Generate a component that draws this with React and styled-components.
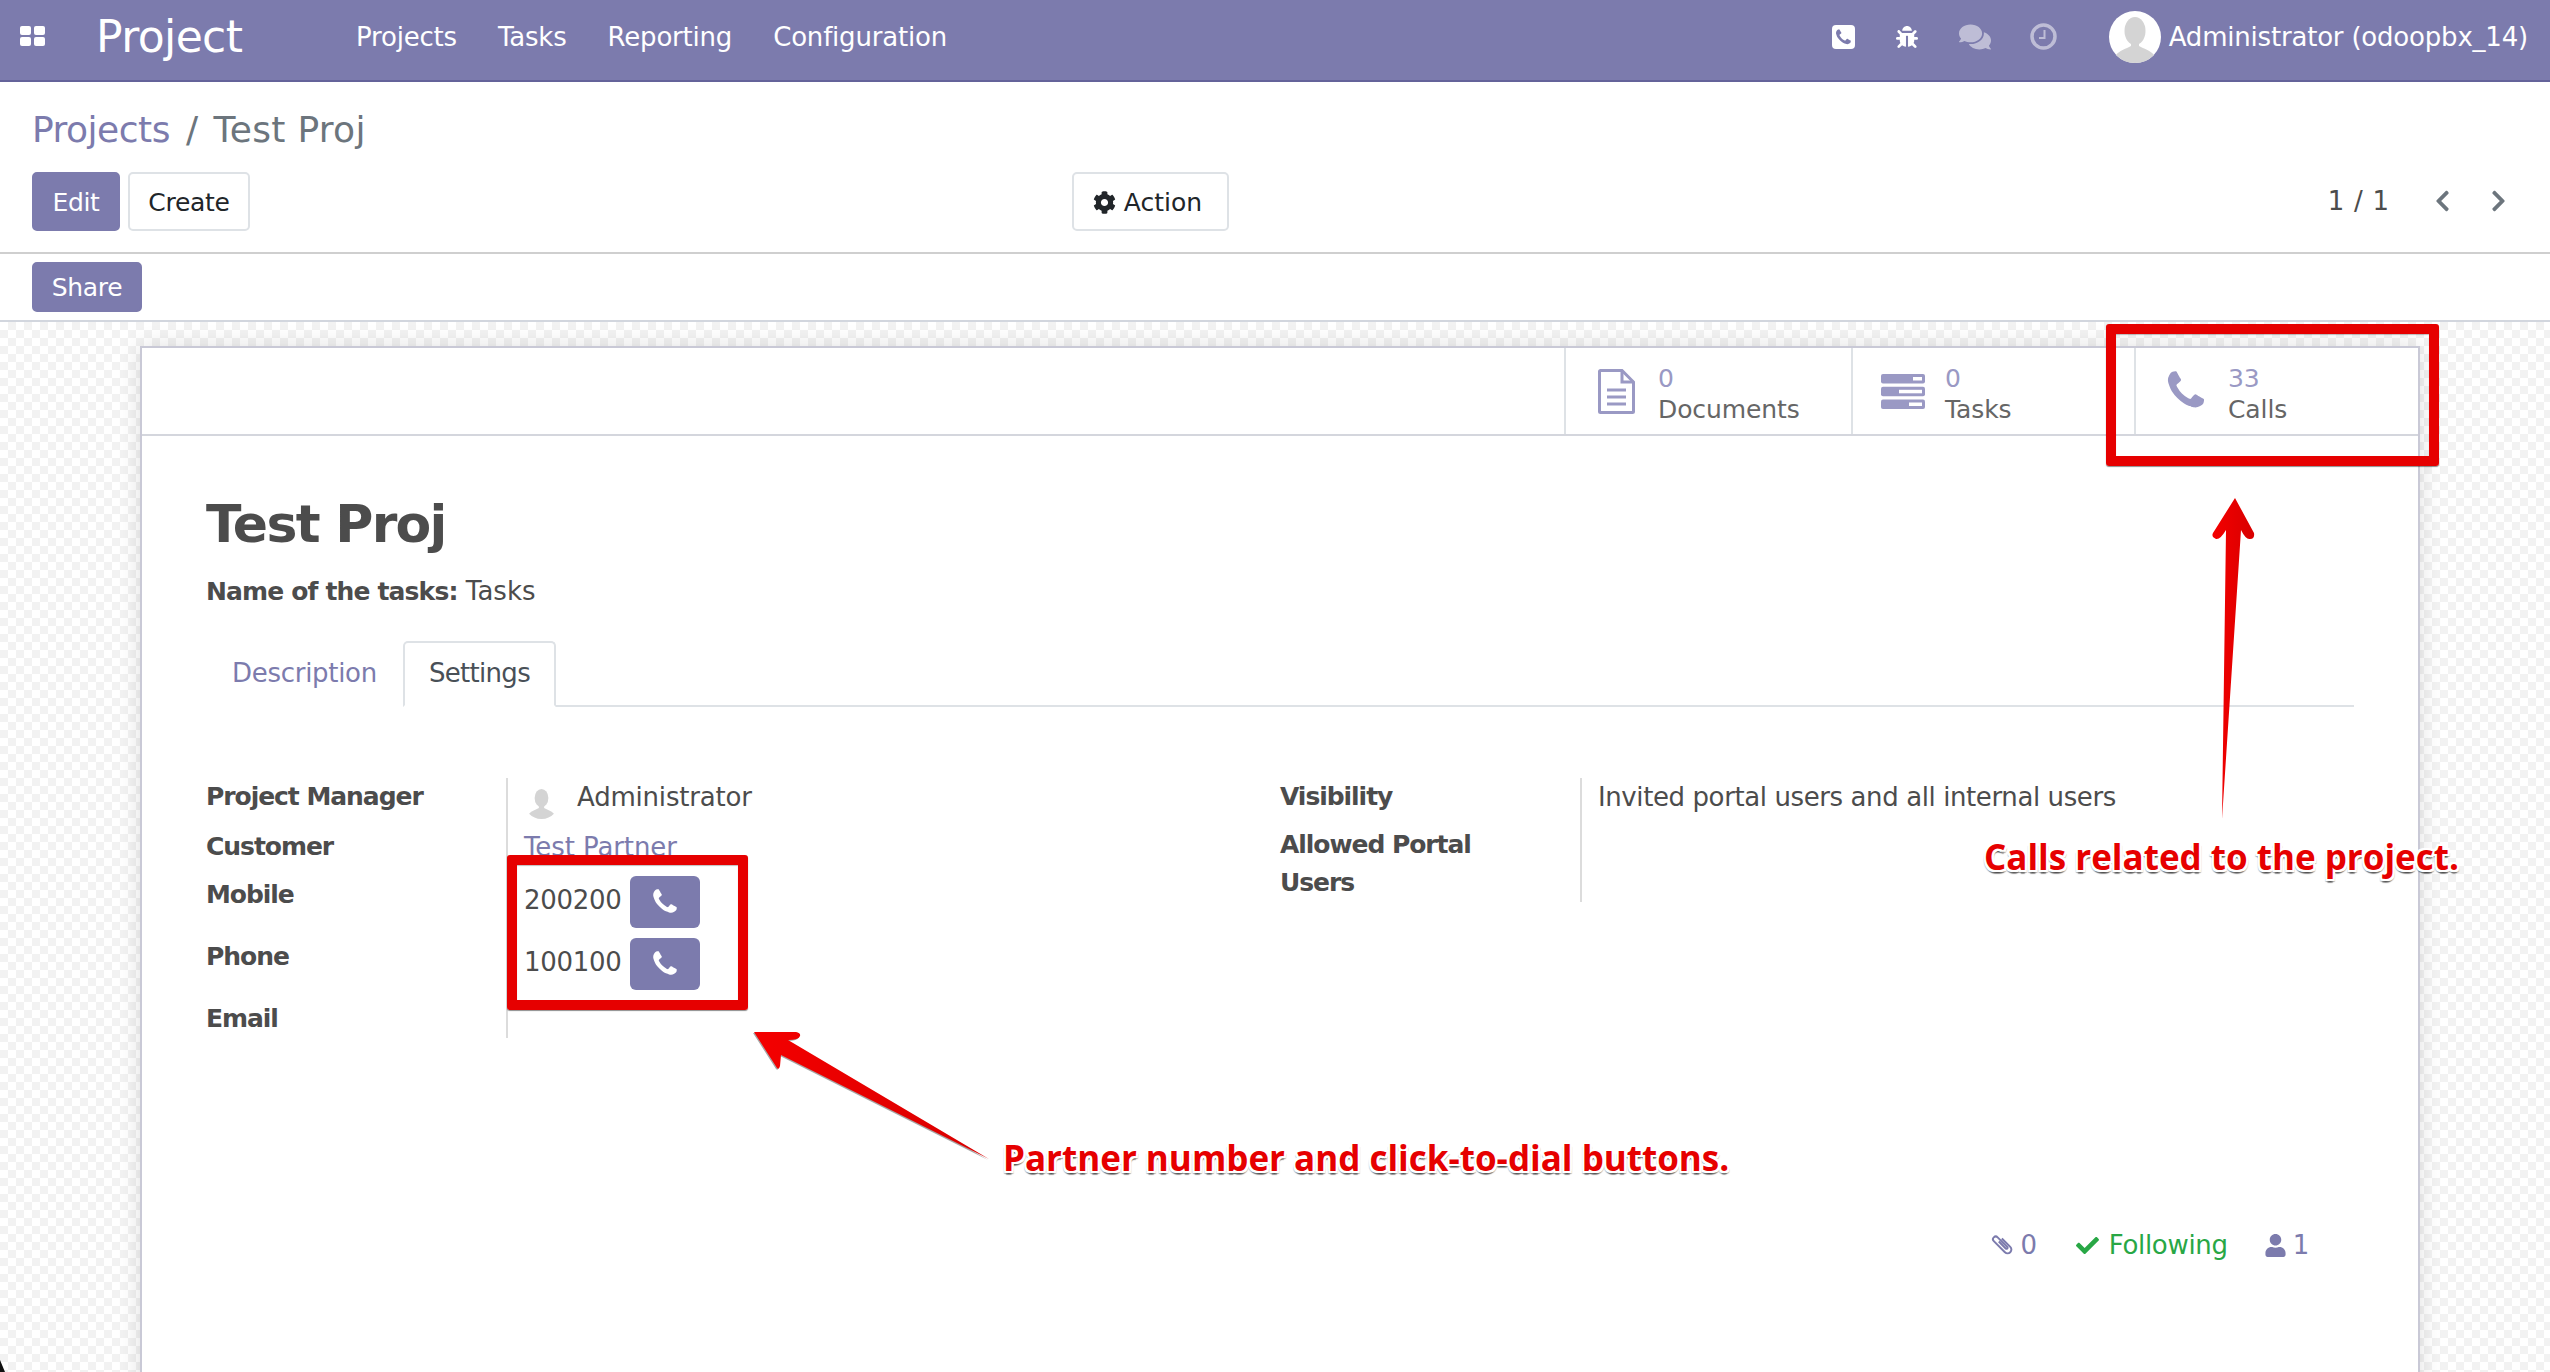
import React from "react";
import styled, { createGlobalStyle } from "styled-components";
import { FaBug, FaComments, FaCog, FaCheck, FaUser, FaChevronLeft, FaChevronRight } from "react-icons/fa";

const PRIMARY = "#7c7bad";
const TEXT = "#4c4c4c";
const UI_FONT = '"DejaVu Sans", "Noto Sans", sans-serif';
const PHONE_D = "M1600 1240q0 27-10 70.5t-21 68.5q-21 50-122 106-94 51-186 51-27 0-53-3.5t-57.5-12.5-47-14.5-55.5-20.5-49-18q-98-35-175-83-127-79-264-216t-216-264q-48-77-83-175-3-9-18-49t-20.5-55.5-14.5-47-12.5-57.5-3.5-53q0-92 51-186 56-101 106-122 25-11 68.5-21t70.5-10q14 0 21 3 18 6 53 76 11 19 30 54t35 63.5 31 53.5q3 4 17.5 25t21.5 35.5 7 28.5q0 20-28.5 50t-62 55-62 53-28.5 46q0 9 5 22.5t8.5 20.5 14 24 11.5 19q76 137 174 235t235 174q2 1 19 11.5t24 14 20.5 8.5 22.5 5q18 0 46-28.5t53-62 55-62 50-28.5q14 0 28.5 7t35.5 21.5 25 17.5q25 15 53.5 31t63.5 35 54 30q70 35 76 53 3 7 3 21z";

const Global = createGlobalStyle`
  html, body { margin: 0; padding: 0; background: #fff; }
  body { font-family: ${UI_FONT}; font-size: 26px; color: ${TEXT}; overflow: hidden; }
  * { box-sizing: border-box; }
`;

const Page = styled.div`
  position: relative;
  width: 2550px;
  height: 1372px;
  overflow: hidden;
  display: flex;
  flex-direction: column;
`;

/* ---------- top navigation ---------- */
const Nav = styled.header`
  flex: none;
  height: 82px;
  background: ${PRIMARY};
  border-bottom: 2px solid #64639a;
  display: flex;
  align-items: center;
  color: #fff;
  padding: 0 22px 7px 20px;
`;
const AppsIcon = styled.svg`
  width: 25px;
  height: 20px;
  fill: #fff;
  margin-top: -1px;
`;
const Brand = styled.span`
  font-size: 44px;
  margin-left: 51px;
  width: 260px;
  letter-spacing: -0.6px;
`;
const NavLinks = styled.nav`
  display: flex;
  gap: 41px;
  font-size: 26px;
  letter-spacing: -0.2px;
`;
const NavRight = styled.div`
  margin-left: auto;
  display: flex;
  align-items: center;
`;
const NavIcon = styled.span`
  display: flex;
  width: ${(p) => p.$w}px;
  margin-right: ${(p) => p.$gap}px;
  opacity: ${(p) => (p.$dim ? 0.5 : 1)};
  svg { display: block; }
`;
const UserName = styled.span`
  font-size: 26px;
  margin-left: 8px;
  letter-spacing: -0.2px;
`;

/* ---------- control panel ---------- */
const ControlPanel = styled.section`
  flex: none;
  height: 172px;
  border-bottom: 2px solid #cfcfcf;
  padding: 0 44px 0 32px;
  display: flex;
  flex-direction: column;
`;
const Breadcrumb = styled.div`
  height: 90px;
  padding-top: 5px;
  display: flex;
  align-items: center;
  font-size: 36px;
  color: #6c757d;
  gap: 16px;
  letter-spacing: -0.5px;
`;
const Crumb = styled.span`
  color: ${PRIMARY};
`;
const CurrentCrumb = styled.span`
  letter-spacing: 0.3px;
`;
const Tools = styled.div`
  display: grid;
  grid-template-columns: 1040px 157px 1fr;
  height: 59px;
`;
const ButtonGroup = styled.div`
  display: flex;
  gap: 8px;
`;
const Button = styled.button`
  font-family: ${UI_FONT};
  font-size: 25px;
  letter-spacing: ${(p) => p.$ls ?? -0.3}px;
  border-radius: 5px;
  padding: ${(p) => p.$pad || "2px 0 0"};
  width: ${(p) => p.$w}px;
  height: ${(p) => p.$h || 59}px;
  display: flex;
  align-items: center;
  justify-content: center;
  gap: 8px;
  color: ${(p) => (p.$primary ? "#fff" : "#212529")};
  background: ${(p) => (p.$primary ? PRIMARY : "#fff")};
  border: 2px solid ${(p) => (p.$primary ? PRIMARY : "#dee2e6")};
`;
const Pager = styled.div`
  display: flex;
  align-items: center;
  justify-content: flex-end;
  font-size: 26px;
  color: ${TEXT};
  margin-top: -2px;
`;
const PagerLabel = styled.span`
  margin-right: 46px;
  word-spacing: 1.5px;
`;
const PagerArrow = styled.span`
  display: flex;
  color: #6c757d;
  width: ${(p) => p.$w}px;
  svg { width: 15px; height: 24px; display: block; }
`;

/* ---------- status bar ---------- */
const ActionBar = styled.section`
  flex: none;
  height: 68px;
  border-bottom: 2px solid #d2d6de;
  padding: 8px 32px;
`;

/* ---------- sheet ---------- */
const Backdrop = styled.main`
  flex: 1;
  min-height: 0;
  padding: 24px 130px 0 140px;
  background-color: #fff;
  background-image: conic-gradient(#f2f2f2 25%, #fff 0 50%, #f2f2f2 0 75%, #fff 0);
  background-size: 16px 16px;
`;
const Sheet = styled.div`
  width: 2280px;
  height: 1100px;
  background: #fff;
  border: 2px solid #c9c9d6;
  box-shadow: 0 0 22px rgba(0, 0, 0, 0.12);
`;
const StatBar = styled.div`
  height: 88px;
  border-bottom: 2px solid #d4d6dd;
  display: flex;
  justify-content: flex-end;
`;
const StatButton = styled.div`
  width: ${(p) => p.$w}px;
  border-left: 2px solid #dee2e6;
  padding-left: 8px;
  display: flex;
  align-items: center;
`;
const StatIcon = styled.div`
  width: 84px;
  display: flex;
  justify-content: center;
  svg { display: block; }
`;
const StatText = styled.div`
  display: flex;
  flex-direction: column;
  padding-top: 5px;
  font-size: 25px;
  line-height: 31px;
  color: #666;
  letter-spacing: -0.1px;
`;
const StatValue = styled.span`
  color: #9a99c4;
  font-weight: 400;
`;
const FormBody = styled.div`
  padding: 56px 64px 0;
`;
const Title = styled.h1`
  margin: 0;
  font-size: 52px;
  line-height: 64px;
  font-weight: 700;
  letter-spacing: -1.7px;
  color: ${TEXT};
`;
const Subtitle = styled.div`
  margin-top: 16px;
  line-height: 38px;
  font-size: 26px;
`;
const Strong = styled.span`
  font-size: 25px;
  font-weight: 700;
  letter-spacing: -0.85px;
`;
const Tabs = styled.div`
  margin-top: 30px;
  height: 66px;
  border-bottom: 2px solid #dee2e6;
  display: flex;
`;
const Tab = styled.div`
  width: ${(p) => p.$w}px;
  height: 66px;
  padding-bottom: 3px;
  display: flex;
  align-items: center;
  justify-content: center;
  color: ${(p) => (p.$active ? "#495057" : PRIMARY)};
  background: #fff;
  letter-spacing: ${(p) => p.$ls}px;
  border-radius: 5px 5px 0 0;
  border: 2px solid ${(p) => (p.$active ? "#dee2e6" : "transparent")};
  border-bottom-color: ${(p) => (p.$active ? "#fff" : "transparent")};
`;
const Columns = styled.div`
  margin-top: 71px;
  display: grid;
  grid-template-columns: 1074px 1fr;
  align-items: start;
`;
const FieldTable = styled.div`
  display: grid;
  grid-template-columns: 300px 1fr;
  grid-template-rows: ${(p) => p.$rows};
`;
const Label = styled.div`
  font-size: 25px;
  font-weight: 700;
  line-height: 38px;
  letter-spacing: -1.05px;
  color: ${TEXT};
`;
const Value = styled.div`
  border-left: 2px solid #dcdcdc;
  padding-left: 16px;
  line-height: 38px;
  display: flex;
  align-items: flex-start;
  letter-spacing: -0.4px;
`;
const PartnerLink = styled.span`
  color: ${PRIMARY};
  letter-spacing: -0.1px;
`;
const ManagerName = styled.span`
  letter-spacing: -0.2px;
`;
const Avatar = styled.svg`
  width: 35px;
  height: 34px;
  margin: 7px 18px 0 0;
  flex: none;
`;
const PhoneNumber = styled.span`
  line-height: 48px;
  width: 106px;
  letter-spacing: -0.3px;
`;
const DialButton = styled.button`
  width: 70px;
  height: 52px;
  padding: 0;
  border: none;
  border-radius: 6px;
  background: ${PRIMARY};
  display: flex;
  align-items: center;
  justify-content: center;
  svg { display: block; fill: #fff; }
`;
const Chatter = styled.div`
  margin-top: 188px;
  padding-right: 45px;
  display: flex;
  justify-content: flex-end;
  align-items: center;
  line-height: 38px;
  color: ${PRIMARY};
`;
const ChatterItem = styled.span`
  display: flex;
  align-items: center;
  gap: ${(p) => p.$gap}px;
  margin-left: ${(p) => p.$left}px;
  color: ${(p) => (p.$green ? "#28a745" : PRIMARY)};
  letter-spacing: -0.3px;
`;

/* ---------- annotations laid over the screenshot ---------- */
const RedBox = styled.div`
  position: absolute;
  left: ${(p) => p.$x}px;
  top: ${(p) => p.$y}px;
  width: ${(p) => p.$w}px;
  height: ${(p) => p.$h}px;
  border: 10px solid #e60000;
  border-radius: 3px;
  box-shadow: 0 1px 1px rgba(0, 0, 0, 0.45), inset 0 1px 1px rgba(0, 0, 0, 0.25);
`;
const Callout = styled.div`
  position: absolute;
  left: ${(p) => p.$x}px;
  top: ${(p) => p.$y}px;
  font-family: "Open Sans", "Noto Sans", sans-serif;
  font-weight: 700;
  font-size: 35px;
  line-height: 50px;
  white-space: nowrap;
  color: #e60000;
  text-shadow: 2px 0 0 #fff, -2px 0 0 #fff, 0 2px 0 #fff, 0 -2px 0 #fff, 2px 2px 0 #fff, -2px 2px 0 #fff,
    2px -2px 0 #fff, -2px -2px 0 #fff, 0 4px 1px rgba(0, 0, 0, 0.4), 2px 3px 1px rgba(0, 0, 0, 0.3),
    -2px 3px 1px rgba(0, 0, 0, 0.3);
`;
const ArrowLayer = styled.svg`
  position: absolute;
  left: 0;
  top: 0;
  width: 2550px;
  height: 1372px;
  pointer-events: none;
`;
const WindowCorner = styled.div`
  position: absolute;
  left: 0;
  bottom: 0;
  width: 5px;
  height: 12px;
  background: #111;
  clip-path: polygon(0 0, 100% 100%, 0 100%);
`;

const Phone = ({ size, fill }) => (
  <svg width={size} height={size} viewBox="0 0 1792 1792" fill={fill}>
    <path d={PHONE_D} />
  </svg>
);

const PhoneSquare = () => (
  <svg width="23" height="24" viewBox="0 0 23 24">
    <rect width="23" height="24" rx="4" fill="#fff" />
    <g transform="translate(2 3) scale(0.0105)">
      <path d={PHONE_D} fill={PRIMARY} />
    </g>
  </svg>
);

const Clock = () => (
  <svg width="27" height="27" viewBox="0 0 27 27" fill="none" stroke="#fff">
    <circle cx="13.5" cy="13.5" r="11.5" strokeWidth="3.5" />
    <path d="M14.5 7v8H9" strokeWidth="2" />
  </svg>
);

const Silhouette = ({ ring }) => (
  <>
    {ring && <circle cx="26" cy="26" r="26" fill="#fff" />}
    <ellipse cx="26" cy="20" rx="10.5" ry="14" fill="#d4d4d4" />
    <path
      d="M22 31h8v4c5 3 11 4 15 9-4.700 5-11 8-19 8s-14-3-19-8c4-5 10-6 15-9z"
      fill="#d4d4d4"
    />
  </>
);

const FileIcon = () => (
  <svg width="37" height="45" viewBox="0 0 37 45" fill="none" stroke="#9a99c4" strokeWidth="3">
    <path d="M1.500 2.500a1 1 0 0 1 1-1H24L35.500 13v29.500a1 1 0 0 1-1 1h-32a1 1 0 0 1-1-1z" />
    <path d="M24 1.500V13h11.500" />
    <path d="M9 21h19M9 28h19M9 35h19" />
  </svg>
);

const TasksIcon = () => (
  <svg width="44" height="35" viewBox="0 0 44 35">
    <g fill="#9a99c4">
      <rect y="0" width="44" height="9.500" rx="2" />
      <rect y="12.800" width="44" height="9.500" rx="2" />
      <rect y="25.500" width="44" height="9.500" rx="2" />
    </g>
    <g fill="#fff">
      <rect x="32" y="3" width="9" height="3.500" />
      <rect x="18" y="15.800" width="23" height="3.500" />
      <rect x="28" y="28.500" width="13" height="3.500" />
    </g>
  </svg>
);

const Clip = () => (
  <svg width="24" height="26" viewBox="0 0 22 24" fill="none" stroke={PRIMARY} strokeWidth="1.800">
    <g transform="rotate(-45 11 12)">
      <path d="M14.500 7v11a3.500 3.500 0 0 1-7 0V3.500a2.500 2.500 0 0 1 5 0V16a1 1 0 0 1-2 0V7" />
    </g>
  </svg>
);

export default function App() {
  return (
    <Page>
      <Global />
      <Nav>
        <AppsIcon viewBox="0 0 25 20">
          <rect width="11" height="9" rx="2" />
          <rect x="14" width="11" height="9" rx="2" />
          <rect y="11" width="11" height="9" rx="2" />
          <rect x="14" y="11" width="11" height="9" rx="2" />
        </AppsIcon>
        <Brand>Project</Brand>
        <NavLinks>
          <span>Projects</span>
          <span>Tasks</span>
          <span>Reporting</span>
          <span>Configuration</span>
        </NavLinks>
        <NavRight>
          <NavIcon $w={23} $gap={41}><PhoneSquare /></NavIcon>
          <NavIcon $w={22} $gap={41}><FaBug size={22} /></NavIcon>
          <NavIcon $w={32} $gap={39} $dim><FaComments size={32} /></NavIcon>
          <NavIcon $w={27} $gap={52} $dim><Clock /></NavIcon>
          <svg width="52" height="52" viewBox="0 0 52 52"><Silhouette ring /></svg>
          <UserName>Administrator (odoopbx_14)</UserName>
        </NavRight>
      </Nav>

      <ControlPanel>
        <Breadcrumb>
          <Crumb>Projects</Crumb>
          <span>/</span>
          <CurrentCrumb>Test Proj</CurrentCrumb>
        </Breadcrumb>
        <Tools>
          <ButtonGroup>
            <Button $primary $w={88}>Edit</Button>
            <Button $w={122}>Create</Button>
          </ButtonGroup>
          <Button $w={157} $ls={0} $pad="2px 6px 0 0"><FaCog size={23} />Action</Button>
          <Pager>
            <PagerLabel>1 / 1</PagerLabel>
            <PagerArrow $w={56}><FaChevronLeft /></PagerArrow>
            <PagerArrow $w={15}><FaChevronRight /></PagerArrow>
          </Pager>
        </Tools>
      </ControlPanel>

      <ActionBar>
        <Button $primary $w={110} $h={50} $pad="0">Share</Button>
      </ActionBar>

      <Backdrop>
        <Sheet>
          <StatBar>
            <StatButton $w={287}>
              <StatIcon><FileIcon /></StatIcon>
              <StatText><StatValue>0</StatValue>Documents</StatText>
            </StatButton>
            <StatButton $w={283}>
              <StatIcon><TasksIcon /></StatIcon>
              <StatText><StatValue>0</StatValue>Tasks</StatText>
            </StatButton>
            <StatButton $w={284}>
              <StatIcon><Phone size={46} fill="#9a99c4" /></StatIcon>
              <StatText><StatValue>33</StatValue>Calls</StatText>
            </StatButton>
          </StatBar>
          <FormBody>
            <Title>Test Proj</Title>
            <Subtitle><Strong>Name of the tasks:</Strong> Tasks</Subtitle>
            <Tabs>
              <Tab $w={197} $ls={-0.3}>Description</Tab>
              <Tab $w={153} $ls={-0.7} $active>Settings</Tab>
            </Tabs>
            <Columns>
              <FieldTable $rows="50px 48px 62px 62px 38px">
                <Label>Project Manager</Label>
                <Value>
                  <Avatar viewBox="0 0 52 52"><Silhouette /></Avatar>
                  <ManagerName>Administrator</ManagerName>
                </Value>
                <Label>Customer</Label>
                <Value><PartnerLink>Test Partner</PartnerLink></Value>
                <Label>Mobile</Label>
                <Value>
                  <PhoneNumber>200200</PhoneNumber>
                  <DialButton><Phone size={30} fill="#fff" /></DialButton>
                </Value>
                <Label>Phone</Label>
                <Value>
                  <PhoneNumber>100100</PhoneNumber>
                  <DialButton><Phone size={30} fill="#fff" /></DialButton>
                </Value>
                <Label>Email</Label>
                <Value />
              </FieldTable>
              <FieldTable $rows="48px 76px">
                <Label>Visibility</Label>
                <Value>Invited portal users and all internal users</Value>
                <Label>Allowed Portal<br />Users</Label>
                <Value />
              </FieldTable>
            </Columns>
            <Chatter>
              <ChatterItem $gap={5} $left={0}><Clip />0</ChatterItem>
              <ChatterItem $gap={10} $left={39} $green><FaCheck size={23} />Following</ChatterItem>
              <ChatterItem $gap={6} $left={36}><FaUser size={23} />1</ChatterItem>
            </Chatter>
          </FormBody>
        </Sheet>
      </Backdrop>

      <RedBox $x={2106} $y={324} $w={333} $h={142} />
      <RedBox $x={507} $y={855} $w={241} $h={155} />
      <ArrowLayer viewBox="0 0 2550 1372">
        <defs>
          <linearGradient id="arrowRed" x1="0" y1="0" x2="1" y2="0">
            <stop offset="0" stopColor="#f40000" />
            <stop offset="1" stopColor="#d80000" />
          </linearGradient>
        </defs>
        <path
          d="M2235 498L2254 533Q2255 539 2250 539Q2246 540 2241 530L2222 819L2226 530Q2220 540 2216 539Q2211 537 2213 533Z"
          fill="url(#arrowRed)"
        />
        <path
          d="M754 1032L796 1032Q801 1033 800 1036Q799 1040 788 1040L989 1159L781 1055L780 1066Q779 1070 777 1068Z"
          fill="url(#arrowRed)"
          style={{ filter: "drop-shadow(-1px 1px 0 rgba(0,0,0,.35))" }}
        />
      </ArrowLayer>
      <Callout $x={1984} $y={832}>Calls related to the project.</Callout>
      <Callout $x={1003} $y={1133}>Partner number and click-to-dial buttons.</Callout>
      <WindowCorner />
    </Page>
  );
}
